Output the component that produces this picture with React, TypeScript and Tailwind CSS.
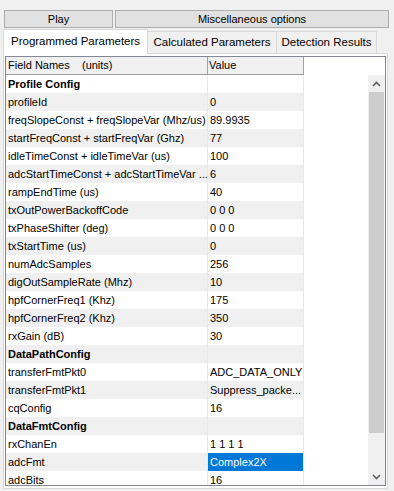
type Row = { name: string; value?: string; section?: boolean; selected?: boolean };

const rows: Row[] = [
  { name: "Profile Config", section: true },
  { name: "profileId", value: "0" },
  { name: "freqSlopeConst + freqSlopeVar (Mhz/us)", value: "89.9935" },
  { name: "startFreqConst + startFreqVar (Ghz)", value: "77" },
  { name: "idleTimeConst + idleTimeVar (us)", value: "100" },
  { name: "adcStartTimeConst + adcStartTimeVar ...", value: "6" },
  { name: "rampEndTime (us)", value: "40" },
  { name: "txOutPowerBackoffCode", value: "0 0 0" },
  { name: "txPhaseShifter (deg)", value: "0 0 0" },
  { name: "txStartTime (us)", value: "0" },
  { name: "numAdcSamples", value: "256" },
  { name: "digOutSampleRate (Mhz)", value: "10" },
  { name: "hpfCornerFreq1 (Khz)", value: "175" },
  { name: "hpfCornerFreq2 (Khz)", value: "350" },
  { name: "rxGain (dB)", value: "30" },
  { name: "DataPathConfig", section: true },
  { name: "transferFmtPkt0", value: "ADC_DATA_ONLY" },
  { name: "transferFmtPkt1", value: "Suppress_packe..." },
  { name: "cqConfig", value: "16" },
  { name: "DataFmtConfig", section: true },
  { name: "rxChanEn", value: "1 1 1 1" },
  { name: "adcFmt", value: "Complex2X", selected: true },
  { name: "adcBits", value: "16" },
];

const Chevron = ({ up }: { up?: boolean }) => (
  <svg width="9" height="6" viewBox="0 0 9 6">
    <polyline
      points={up ? "1,5 4.5,1.5 8,5" : "1,1 4.5,4.5 8,1"}
      fill="none"
      stroke="#606060"
      strokeWidth="1.6"
    />
  </svg>
);

export default function App() {
  return (
    <div className="w-[394px] h-[491px] bg-[#f0f0f0] overflow-hidden font-['Liberation_Sans',Arial,sans-serif] text-black">
      {/* top buttons */}
      <div className="flex gap-[2px] pl-[4px] pt-[10px]">
        <div className="w-[109px] h-[18px] bg-[#e1e1e1] border border-[#adadad] flex items-center justify-center text-[11px]">
          Play
        </div>
        <div className="w-[274px] h-[18px] bg-[#e1e1e1] border border-[#adadad] flex items-center justify-center text-[11px]">
          Miscellaneous options
        </div>
      </div>

      {/* tabs */}
      <div className="flex items-end h-[25px] pl-[3px] text-[11.5px]">
        <div className="w-[145px] h-[25px] bg-white border border-b-0 border-[#d9d9d9] flex items-center pl-[7px] relative top-[1px] z-10">
          Programmed Parameters
        </div>
        <div className="w-[129px] h-[22px] bg-[#f0f0f0] border border-l-0 border-b-0 border-[#d9d9d9] flex items-center justify-center pt-[1px]">
          Calculated Parameters
        </div>
        <div className="w-[100px] h-[22px] bg-[#f0f0f0] border border-l-0 border-b-0 border-[#d9d9d9] flex items-center justify-center pt-[1px]">
          Detection Results
        </div>
      </div>

      {/* tab page */}
      <div className="ml-[3px] w-[385px] h-[436px] bg-white border border-[#d9d9d9] pt-[2px] pl-[1px]">
        <div className="w-[381px] h-[430px] border border-[#828790] flex flex-col text-[11px] bg-white">
          {/* header */}
          <div className="flex h-[18px] shrink-0">
            <div className="w-[202px] bg-[#f0f0f0] border-r border-b border-[#a0a0a0] flex items-center pl-[2px] whitespace-pre">
              {"Field Names    (units)"}
            </div>
            <div className="w-[96px] bg-[#f0f0f0] border-r border-b border-[#a0a0a0] flex items-center pl-[1px]">
              Value
            </div>
            <div className="flex-1" />
          </div>

          {/* body */}
          <div className="flex flex-1 min-h-0">
            <div className="flex-1 overflow-hidden">
              {rows.map((r, i) => (
                <div key={i} className="flex h-[18px]">
                  <div
                    className={`w-[202px] border-r border-[#e8e8e8] flex items-center pl-[2px] whitespace-nowrap overflow-hidden ${
                      i % 2 ? "bg-[#f0f0f0]" : "bg-white"
                    } ${r.section ? "font-bold" : ""}`}
                  >
                    {r.name}
                  </div>
                  <div
                    className={`w-[96px] border-r border-[#e8e8e8] flex items-center pl-[2px] whitespace-nowrap overflow-hidden ${
                      r.selected ? "bg-[#0078d7] text-white" : i % 2 ? "bg-[#f0f0f0]" : "bg-white"
                    }`}
                  >
                    {r.value}
                  </div>
                </div>
              ))}
            </div>

            {/* scrollbar */}
            <div className="w-[17px] bg-[#f0f0f0] flex flex-col">
              <div className="h-[17px] flex items-center justify-center">
                <Chevron up />
              </div>
              <div className="h-[341px] mx-[1px] bg-[#cdcdcd]" />
              <div className="flex-1" />
              <div className="h-[17px] flex items-center justify-center">
                <Chevron />
              </div>
            </div>
          </div>
        </div>
      </div>
    </div>
  );
}
